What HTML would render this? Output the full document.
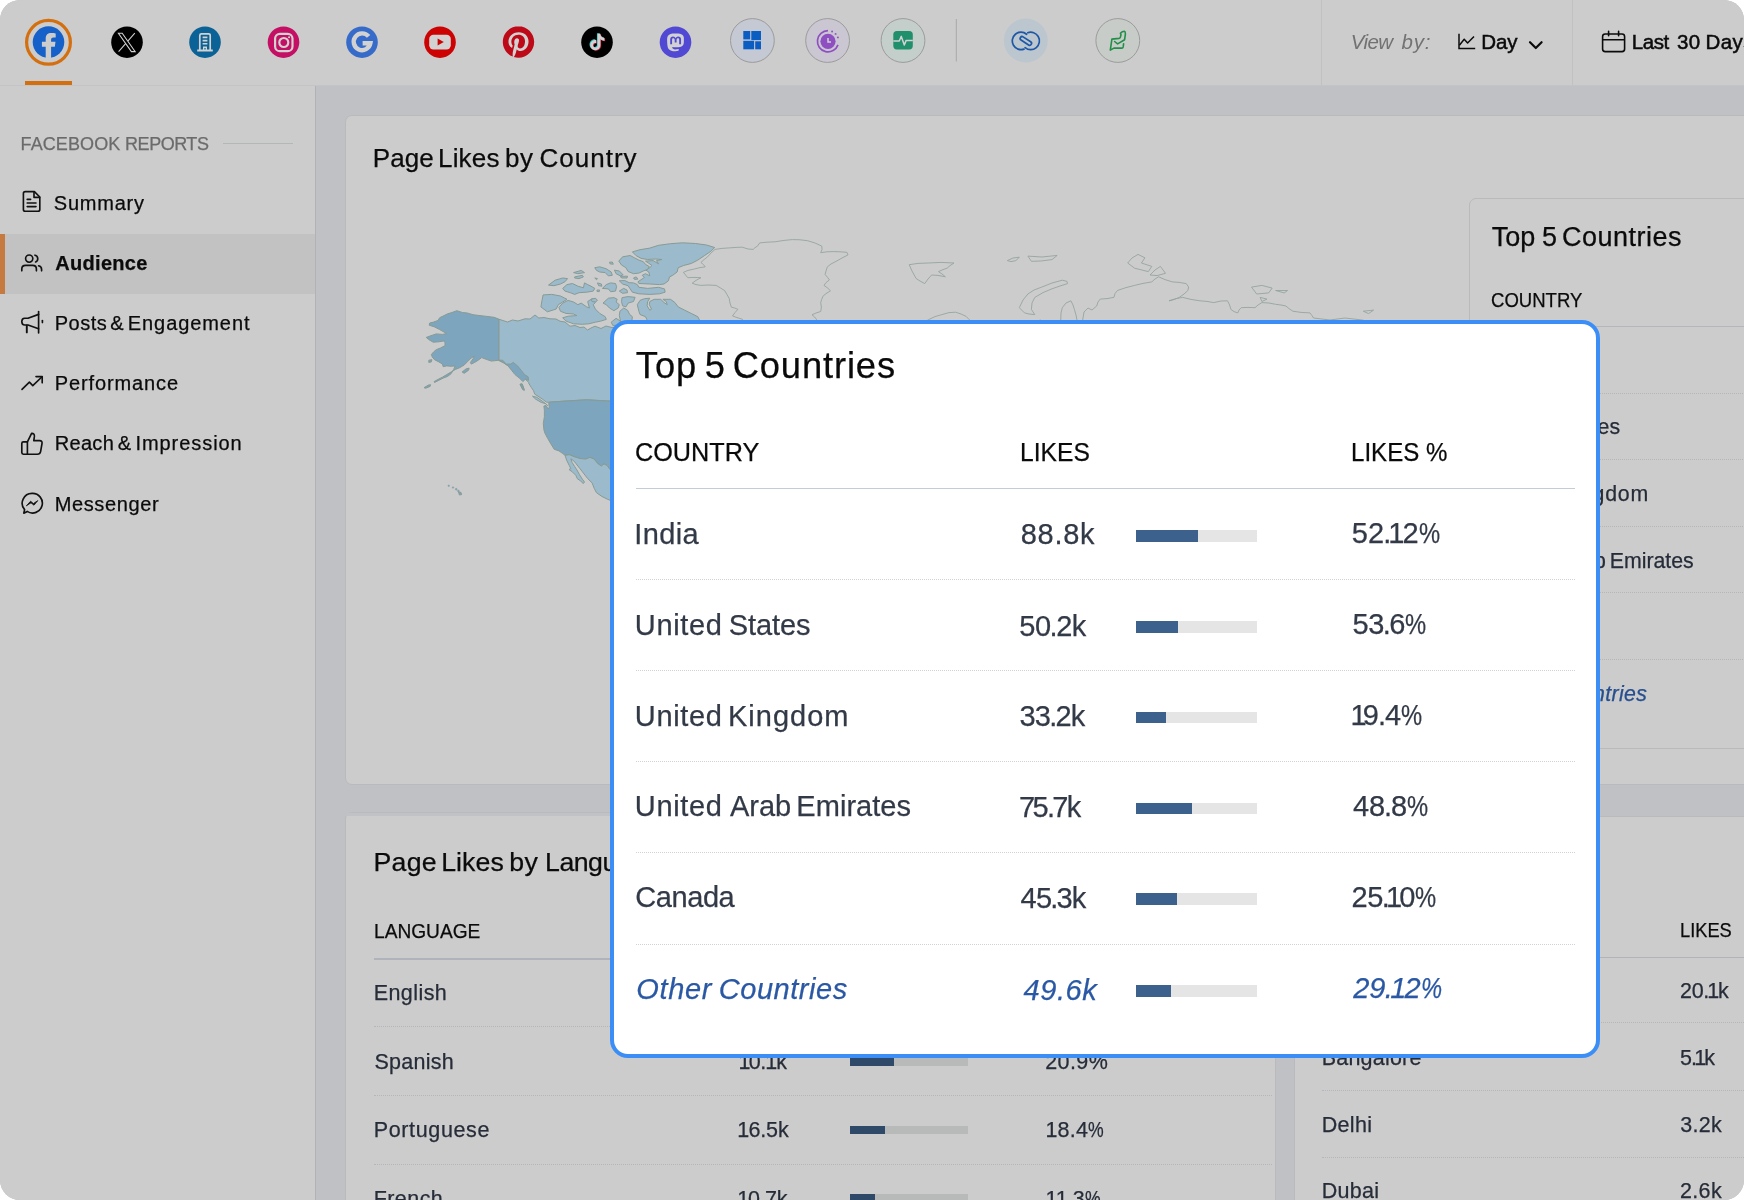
<!DOCTYPE html>
<html lang="en"><head><meta charset="utf-8"><title>Facebook Reports - Audience</title>
<style>
html,body{margin:0;padding:0;background:#fff;}
body{width:1744px;height:1200px;overflow:hidden;font-family:"Liberation Sans",sans-serif;}
#app{position:absolute;left:0;top:0;width:1744px;height:1200px;border-radius:20px;overflow:hidden;background:#c0c1c5;will-change:transform;}
.t{position:absolute;white-space:nowrap;line-height:1;-webkit-text-stroke:0.25px currentColor;}
.r{position:absolute;}
.w{position:absolute;top:0;white-space:pre;}
svg{position:absolute;overflow:visible;}
</style></head><body><div id="app">
<div class="r" style="left:0px;top:0px;width:1744px;height:85px;background:#cccccc;"></div>
<div class="r" style="left:0px;top:85px;width:1744px;height:1px;background:#c3c4c7;"></div>
<div class="r" style="left:0px;top:86px;width:315px;height:1114px;background:#cccccc;"></div>
<div class="r" style="left:315px;top:86px;width:1px;height:1114px;background:#b1b2b5;"></div>
<div class="r" style="left:1321px;top:0px;width:1px;height:85px;background:#c1c1c3;"></div>
<div class="r" style="left:1572px;top:0px;width:1px;height:85px;background:#c1c1c3;"></div>
<div class="r" style="left:0px;top:233.75px;width:315px;height:59.75px;background:#c2c2c2;"></div>
<div class="r" style="left:0px;top:233.75px;width:4.6px;height:59.75px;background:#c77a3f;"></div>
<div class="r" style="left:25px;top:81px;width:47px;height:4px;background:#d46f10;"></div>
<div class="r" style="left:345px;top:115px;width:1500px;height:670px;background:#cccccc;border:1px solid #b9babb;border-radius:7px;box-sizing:border-box;"></div>
<div class="r" style="left:1469px;top:198px;width:400px;height:550.5px;background:#cccccc;border:1px solid #b9babb;border-radius:7px;box-sizing:border-box;"></div>
<div class="r" style="left:345px;top:812px;width:931px;height:500px;background:#cccccc;border:1px solid #b9babb;border-radius:7px;box-sizing:border-box;"></div>
<div class="r" style="left:346px;top:813px;width:929px;height:2.5px;background:#c1c2c6;border-radius:6px 6px 0 0;"></div>
<div class="r" style="left:1294px;top:816px;width:600px;height:500px;background:#cccccc;border:1px solid #b9babb;border-radius:7px;box-sizing:border-box;"></div>
<svg width="1744" height="1200" viewBox="0 0 1744 1200" style="left:0;top:0">
<circle cx="48.5" cy="42.3" r="21.9" fill="none" stroke="#d46f10" stroke-width="3.2"/><circle cx="48.5" cy="42.1" r="15.8" fill="#1560c9"/><path transform="translate(48.5 42.1)" fill="#cccccc" d="M-2.8 16.2L-2.8 4.6L-6.6 4.6L-6.6 -0.4L-2.8 -0.4L-2.8 -3.6C-2.8 -7.3 -0.6 -9.1 2.7 -9.1C4.4 -9.1 6 -8.9 7.2 -8.7L7.2 -4.5L5 -4.5C3.1 -4.5 2.6 -3.6 2.6 -2.2L2.6 -0.4L7 -0.4L6.3 4.6L2.6 4.6L2.6 16.2Z"/>
<circle cx="127" cy="42.2" r="15.8" fill="#000"/><g transform="translate(126.8 42.4)" stroke="#d2d2d2" stroke-width="1.05" fill="#000"><path d="M8 -9.2L-8.2 9.2" /><path d="M-8.4 -9.2H-4.6L8.4 9.2H4.6Z"/></g>
<circle cx="205" cy="42.2" r="15.8" fill="#0b6296"/><g transform="translate(205 42)" fill="none" stroke="#d2d2d2" stroke-width="1.7"><path d="M-5.2 8.2V-6.6q0-1.6 1.6-1.6h7.2q1.6 0 1.6 1.6V8.2"/><path d="M-7.8 8.6H7.8" stroke-width="2"/><path d="M-2.4 -4.6H2.4M-2.4 -1.4H2.4M-2.4 1.8H2.4" stroke-width="1.6"/><path d="M-1.3 8.2V5.2H1.3V8.2" stroke-width="1.4"/></g>
<circle cx="283.5" cy="42.2" r="15.8" fill="#c50f65"/><g transform="translate(283.8 42.5)" fill="none" stroke="#d2d2d2" stroke-width="2.2"><rect x="-8.7" y="-8.7" width="17.4" height="17.4" rx="4.8"/><circle r="4.5"/><circle cx="5.3" cy="-5.3" r="1.05" fill="#d2d2d2" stroke="none"/></g>
<circle cx="362" cy="42.2" r="15.8" fill="#376bca"/><path transform="translate(362 42)" fill="none" stroke="#d2d2d2" stroke-width="4.4" d="M6.6 -5.6A8.4 8.4 0 1 0 8.4 1.2H0.6"/>
<circle cx="440" cy="42.2" r="15.8" fill="#cd0202"/><rect x="429.2" y="34.8" width="21.6" height="14.6" rx="4.2" fill="#d2d2d2"/><path d="M437.6 38.6L443.8 42.1L437.6 45.6Z" fill="#cd0202"/>
<circle cx="518.5" cy="42" r="15" fill="#d2d2d2"/><path transform="translate(518.5 42) scale(1.31) translate(-12 -12)" fill="#be0a18" d="M12.017 0C5.396 0 .029 5.367.029 11.987c0 5.079 3.158 9.417 7.618 11.162-.105-.949-.199-2.403.041-3.439.219-.937 1.406-5.957 1.406-5.957s-.359-.72-.359-1.781c0-1.663.967-2.911 2.168-2.911 1.024 0 1.518.769 1.518 1.688 0 1.029-.653 2.567-.992 3.992-.285 1.193.6 2.165 1.775 2.165 2.128 0 3.768-2.245 3.768-5.487 0-2.861-2.063-4.869-5.008-4.869-3.41 0-5.409 2.562-5.409 5.199 0 1.033.394 2.143.889 2.741.099.12.112.225.085.345-.09.375-.293 1.199-.334 1.363-.053.225-.172.271-.401.165-1.495-.69-2.433-2.878-2.433-4.646 0-3.776 2.748-7.252 7.92-7.252 4.158 0 7.392 2.967 7.392 6.923 0 4.135-2.607 7.462-6.233 7.462-1.214 0-2.354-.629-2.758-1.379l-.749 2.848c-.269 1.045-1.004 2.352-1.498 3.146 1.123.345 2.306.535 3.55.535 6.607 0 11.985-5.365 11.985-11.987C23.97 5.39 18.592.026 11.985.026L12.017 0z"/>
<circle cx="597" cy="42.2" r="15.8" fill="#000"/><path transform="translate(596.5999999999999 41.4) scale(0.68) translate(-12 -12)" fill="#22c9c4" d="M12.525.02c1.31-.02 2.61-.01 3.91-.02.08 1.53.63 3.09 1.75 4.17 1.12 1.11 2.7 1.62 4.24 1.79v4.03c-1.44-.05-2.89-.35-4.2-.97-.57-.26-1.1-.59-1.62-.93-.01 2.92.01 5.84-.02 8.75-.08 1.4-.54 2.79-1.35 3.94-1.31 1.92-3.58 3.17-5.91 3.21-1.43.08-2.86-.31-4.08-1.03-2.02-1.19-3.44-3.37-3.65-5.71-.02-.5-.03-1-.01-1.49.18-1.9 1.12-3.72 2.58-4.96 1.66-1.44 3.98-2.13 6.15-1.72.02 1.48-.04 2.96-.04 4.44-.99-.32-2.15-.23-3.02.37-.63.41-1.11 1.04-1.36 1.75-.21.51-.15 1.07-.14 1.61.24 1.64 1.82 3.02 3.5 2.87 1.12-.01 2.19-.66 2.77-1.61.19-.33.4-.67.41-1.06.1-1.79.06-3.57.07-5.36.01-4.03-.01-8.05.02-12.07z"/><path transform="translate(598.0 42.6) scale(0.68) translate(-12 -12)" fill="#d0264a" d="M12.525.02c1.31-.02 2.61-.01 3.91-.02.08 1.53.63 3.09 1.75 4.17 1.12 1.11 2.7 1.62 4.24 1.79v4.03c-1.44-.05-2.89-.35-4.2-.97-.57-.26-1.1-.59-1.62-.93-.01 2.92.01 5.84-.02 8.75-.08 1.4-.54 2.79-1.35 3.94-1.31 1.92-3.58 3.17-5.91 3.21-1.43.08-2.86-.31-4.08-1.03-2.02-1.19-3.44-3.37-3.65-5.71-.02-.5-.03-1-.01-1.49.18-1.9 1.12-3.72 2.58-4.96 1.66-1.44 3.98-2.13 6.15-1.72.02 1.48-.04 2.96-.04 4.44-.99-.32-2.15-.23-3.02.37-.63.41-1.11 1.04-1.36 1.75-.21.51-.15 1.07-.14 1.61.24 1.64 1.82 3.02 3.5 2.87 1.12-.01 2.19-.66 2.77-1.61.19-.33.4-.67.41-1.06.1-1.79.06-3.57.07-5.36.01-4.03-.01-8.05.02-12.07z"/><path transform="translate(597.3 42) scale(0.68) translate(-12 -12)" fill="#d2d2d2" d="M12.525.02c1.31-.02 2.61-.01 3.91-.02.08 1.53.63 3.09 1.75 4.17 1.12 1.11 2.7 1.62 4.24 1.79v4.03c-1.44-.05-2.89-.35-4.2-.97-.57-.26-1.1-.59-1.62-.93-.01 2.92.01 5.84-.02 8.75-.08 1.4-.54 2.79-1.35 3.94-1.31 1.92-3.58 3.17-5.91 3.21-1.43.08-2.86-.31-4.08-1.03-2.02-1.19-3.44-3.37-3.65-5.71-.02-.5-.03-1-.01-1.49.18-1.9 1.12-3.72 2.58-4.96 1.66-1.44 3.98-2.13 6.15-1.72.02 1.48-.04 2.96-.04 4.44-.99-.32-2.15-.23-3.02.37-.63.41-1.11 1.04-1.36 1.75-.21.51-.15 1.07-.14 1.61.24 1.64 1.82 3.02 3.5 2.87 1.12-.01 2.19-.66 2.77-1.61.19-.33.4-.67.41-1.06.1-1.79.06-3.57.07-5.36.01-4.03-.01-8.05.02-12.07z"/>
<circle cx="675.5" cy="42.2" r="15.8" fill="#5149d3"/><path transform="translate(675.5 42.4) scale(0.74) translate(-12 -11.9)" fill="#d2d2d2" d="M23.268 5.313c-.35-2.578-2.617-4.61-5.304-5.004C17.51.242 15.792 0 11.813 0h-.03c-3.98 0-4.835.242-5.288.309C3.882.692 1.496 2.518.917 5.127.64 6.412.61 7.837.661 9.143c.074 1.874.088 3.745.26 5.611.118 1.24.325 2.47.62 3.68.55 2.237 2.777 4.098 4.96 4.857 2.336.792 4.849.923 7.256.38.265-.061.527-.132.786-.213.585-.184 1.27-.39 1.774-.753a.057.057 0 0 0 .023-.043v-1.809a.052.052 0 0 0-.02-.041.053.053 0 0 0-.046-.01 20.282 20.282 0 0 1-4.709.545c-2.73 0-3.463-1.284-3.674-1.818a5.593 5.593 0 0 1-.319-1.433.053.053 0 0 1 .066-.054c1.517.363 3.072.546 4.632.546.376 0 .75 0 1.125-.01 1.57-.044 3.224-.124 4.768-.422.038-.008.077-.015.11-.024 2.435-.464 4.753-1.92 4.989-5.604.008-.145.03-1.52.03-1.67.002-.512.167-3.63-.024-5.545zm-3.748 9.195h-2.561V8.29c0-1.309-.55-1.976-1.67-1.976-1.23 0-1.846.79-1.846 2.35v3.403h-2.546V8.663c0-1.56-.617-2.35-1.848-2.35-1.112 0-1.668.668-1.67 1.977v6.218H4.822V8.102c0-1.31.337-2.35 1.011-3.12.696-.77 1.608-1.164 2.74-1.164 1.311 0 2.302.5 2.962 1.498l.638 1.06.638-1.06c.66-.999 1.65-1.498 2.96-1.498 1.13 0 2.043.395 2.74 1.164.675.77 1.012 1.81 1.012 3.12z"/>
<circle cx="752.4" cy="40.5" r="21.9" fill="#c5c9d3" stroke="#9b9b9b" stroke-width="1"/><g fill="#0b5dc2"><rect x="743.3" y="31" width="6.9" height="8.4"/><rect x="751.3" y="31" width="9.7" height="9.1"/><rect x="743.3" y="40.8" width="10.8" height="8.5"/><rect x="755.2" y="41.3" width="5.8" height="8"/></g>
<circle cx="827.6" cy="40.5" r="21.9" fill="#cbc7d2" stroke="#9b9b9b" stroke-width="1"/><g transform="translate(828 41.3)"><circle r="7.6" fill="#8e4fc1"/><path d="M0 -10.6A10.6 10.6 0 1 0 10 3.6" fill="none" stroke="#8e4fc1" stroke-width="1.7"/><circle cx="4.1" cy="-9.8" r="0.95" fill="#8e4fc1"/><circle cx="7.6" cy="-7.4" r="0.95" fill="#8e4fc1"/><circle cx="9.9" cy="-3.9" r="0.95" fill="#8e4fc1"/><path d="M0 -3.4V0.6H3" fill="none" stroke="#d2d2d2" stroke-width="1.5"/></g>
<circle cx="903" cy="40.5" r="21.9" fill="#c4cfcb" stroke="#9b9b9b" stroke-width="1"/><rect x="893.3" y="31" width="19.5" height="18.4" rx="3.6" fill="#208f6c"/><path d="M893.3 41H899.3L901.3 36.4L904.3 45L906.2 40.4H912.8" fill="none" stroke="#d2d2d2" stroke-width="1.5" stroke-linejoin="round"/>
<rect x="955.8" y="19" width="1" height="42.5" fill="#a9a9a9"/>
<circle cx="1025.8" cy="40.5" r="21.9" fill="#bcc6ce"/><g transform="translate(1025.85 40.9)" fill="none" stroke="#1d57a6" stroke-width="1.7" stroke-linecap="round"><path d="M0.74 -6.66A8.7 8.7 0 1 0 -1.87 8.18"/><path d="M-0.74 6.66A8.7 8.7 0 1 0 1.87 -8.18"/><rect x="-6.4" y="-1.9" width="12.8" height="3.8" rx="1.9" transform="rotate(33)"/></g>
<circle cx="1117.8" cy="40.5" r="21.9" fill="#c8ccc8" stroke="#9b9b9b" stroke-width="1"/><g transform="translate(1117.6 40.9)" fill="none" stroke="#218f48" stroke-width="1.6" stroke-linejoin="round" stroke-linecap="round"><path d="M6 2.8L5.6 6Q5.4 7.2 4.2 7.2H-3.7L-7.3 9.2L-5.7 -1.8L1.4 -2.5Q2.6 -2.7 2.8 -3.8L3.4 -6.2L2.8 -7.6Q4.6 -9.6 6.8 -9.6Q7.8 -9.4 7.8 -6.8L7 -1.2L0 3L-3 0.6"/></g>
<g fill="none" stroke="#0b0b0b" stroke-width="1.5"><path d="M1459 33.8V48.5H1475.2"/><path d="M1459.4 45.2L1464.2 39.2L1467.6 43L1474 36.4" stroke-linejoin="round"/></g>
<path d="M1530 42.2L1535.8 48L1541.6 42.2" fill="none" stroke="#0b0b0b" stroke-width="2.2" stroke-linecap="round" stroke-linejoin="round"/>
<g fill="none" stroke="#0b0b0b" stroke-width="1.6"><rect x="1602.6" y="34" width="22" height="17.6" rx="2.6"/><path d="M1602.6 39.8H1624.6"/><path d="M1608.6 31.4V35.8M1618.6 31.4V35.8" stroke-linecap="round"/></g>
<g fill="none" stroke="#111" stroke-width="1.65" stroke-linejoin="round" stroke-linecap="round"><path d="M25.2 191.6H34.4L39.8 197V209.4Q39.8 211.2 38 211.2H25.2Q23.4 211.2 23.4 209.4V193.4Q23.4 191.6 25.2 191.6Z"/><path d="M34 191.8V197.4H39.6"/><path d="M27.2 199.4H30.6M27.2 203H36M27.2 206.6H36"/></g>
<g fill="none" stroke="#111" stroke-width="1.65" stroke-linejoin="round" stroke-linecap="round"><circle cx="29.2" cy="258.6" r="3.6"/><path d="M21.8 270.8V269Q21.8 265.4 25.6 265.4H32.6Q36.4 265.4 36.4 269V270.8"/><path d="M35 255.2A3.6 3.6 0 0 1 35.6 262"/><path d="M38.6 265.8Q41.6 266.4 41.6 269.4V270.8"/></g>
<g fill="none" stroke="#111" stroke-width="1.65" stroke-linejoin="round" stroke-linecap="round"><path d="M38.6 311.6V333"/><path d="M38.6 314.4L28 318.2H24.6Q21.8 318.2 21.8 321.6Q21.8 325 24.6 325H28L38.6 328.8"/><path d="M26.8 325.4V332.4" stroke-width="1.9"/><path d="M42.4 320.6V322.6"/></g>
<g fill="none" stroke="#111" stroke-width="1.65" stroke-linejoin="round" stroke-linecap="round" stroke-width="1.7"><path d="M22 389.4L29.4 382.2L32.8 385.6L41.8 377"/><path d="M36 376.6H42.2V382.8"/></g>
<g fill="none" stroke="#111" stroke-width="1.65" stroke-linejoin="round" stroke-linecap="round"><path d="M27.4 441.8L31.6 433.4Q34.6 433.2 34.4 436.4L33.8 440.6H39.6Q42.6 440.8 42 443.6L40.6 451.6Q40 454.2 37.4 454.2H27.4"/><path d="M27.4 441.8V454.2H23.4Q21.8 454.2 21.8 452.6V443.4Q21.8 441.8 23.4 441.8Z"/></g>
<g fill="none" stroke="#111" stroke-width="1.65" stroke-linejoin="round" stroke-linecap="round"><path d="M32.2 493.4A9.8 9.8 0 1 1 27.2 511.4L23.8 513.2L24.6 509.6A9.8 9.8 0 0 1 32.2 493.4Z"/><path d="M26.6 505.6L30.6 501.2L33.4 503.6L37.8 500.6L34 505.2L31.2 503Z" fill="#111" stroke-width="0.8"/></g>
<g>
<path d="M498.8 319.2L507.5 322.0L512.5 320.0L518.0 321.0L525.0 318.8L530.0 319.0L535.0 315.0L538.8 318.0L544.0 317.5L550.0 318.8L556.0 319.0L560.0 321.2L565.0 322.0L570.0 326.2L575.0 325.5L580.0 327.5L584.0 327.0L587.5 330.0L591.0 328.0L595.0 326.2L601.0 328.5L606.0 326.0L612.0 327.5L622.0 326.0L640.0 330.0L640.0 401.1L609.9 401.1L586.6 399.8L565.0 401.1L549.3 402.2L546.6 402.2L542.2 399.0L537.9 396.2L534.7 394.1L533.6 390.8L531.4 387.6L528.7 383.2L528.8 382.5L524.0 378.0L517.5 373.8L513.0 370.0L510.0 367.5L505.0 363.5L498.8 360.5Z" fill="#9bbacc" stroke="#879b95" stroke-width="1.0" stroke-linejoin="round"/><path d="M498.8 319.1L494.0 317.3L487.0 316.4L480.0 315.6L473.0 314.7L466.9 312.9L462.5 312.5L456.8 310.7L452.0 312.5L447.6 313.8L443.2 316.0L439.7 317.7L438.0 320.4L433.6 322.1L429.7 323.0L429.2 325.2L434.5 326.9L439.7 329.6L445.0 332.6L446.7 333.5L442.4 334.4L436.2 333.9L431.0 335.7L426.2 337.4L428.8 339.6L433.2 342.2L438.9 341.8L444.1 340.9L445.0 342.7L445.0 345.7L440.6 347.9L436.2 349.7L433.6 351.9L431.4 354.5L432.3 357.1L434.5 359.7L438.9 361.9L442.4 364.1L443.2 366.7L446.7 365.9L451.1 366.3L455.1 365.9L453.7 369.4L451.1 373.7L447.6 376.4L443.2 378.1L438.9 380.3L434.5 382.5L434.1 381.6L438.0 379.4L442.4 377.2L446.7 374.6L451.1 372.0L455.5 369.4L459.9 367.6L464.2 365.0L467.7 361.5L471.2 358.0L474.3 356.2L473.0 358.9L470.4 362.4L471.2 364.1L474.7 362.4L478.2 360.2L481.7 357.6L486.1 359.3L491.4 361.1L498.8 360.2L502.7 360.2L506.2 364.1L510.6 364.1L513.2 362.4L517.6 365.9L521.1 370.2L524.6 374.6L528.1 376.8L528.6 380.3L525.5 379.0L522.9 381.6L519.4 378.1L515.0 374.6L511.5 370.2L508.0 365.9L503.6 362.8L498.8 360.2Z" fill="#7da5bd" stroke="#879b95" stroke-width="1.0" stroke-linejoin="round"/><path d="M549.3 402.2L565.0 401.1L586.6 399.8L609.9 401.1L639.7 401.1L639.7 469.9L609.9 469.4L607.2 465.6L604.0 463.9L601.3 466.1L597.5 463.4L594.2 459.1L589.9 457.4L585.6 459.1L580.1 458.5L574.7 456.9L569.3 454.7L565.0 455.3L562.8 453.6L559.0 450.9L554.2 449.3L550.9 443.9L547.7 438.5L544.9 433.1L543.9 429.8L543.3 423.3L544.4 416.8L544.4 410.3L543.9 406.0L546.0 405.5L548.2 409.0L549.3 407.1L548.7 403.3Z" fill="#7da5bd" stroke="#879b95" stroke-width="1.0" stroke-linejoin="round"/><path d="M565.0 455.3L569.3 454.7L574.7 456.9L580.1 458.5L585.6 459.1L589.9 457.4L594.2 459.1L597.5 463.4L601.3 466.1L604.0 463.9L607.2 465.6L609.9 469.4L639.7 469.9L639.7 507.8L609.9 500.2L607.2 499.1L601.8 496.4L596.4 492.6L594.2 488.3L592.1 482.9L587.7 478.6L583.4 473.1L580.1 468.8L575.8 463.4L573.6 460.7L570.9 458.8L572.0 462.3L574.7 466.6L576.9 469.9L579.6 474.8L582.3 479.1L584.5 482.0L583.2 483.6L580.7 480.9L577.4 478.8L575.8 475.3L572.6 472.1L569.0 469.5L570.9 468.6L569.3 465.6L566.6 460.1Z" fill="#9bbacc" stroke="#879b95" stroke-width="1.0" stroke-linejoin="round"/><path d="M462.1 372.0L466.0 368.9L469.1 368.1L468.6 370.2L464.2 373.3Z" fill="#7da5bd" stroke="#879b95" stroke-width="1.0" stroke-linejoin="round"/><path d="M428.8 360.2L431.9 359.7L431.4 361.9L428.8 362.4Z" fill="#7da5bd" stroke="#879b95" stroke-width="1.0" stroke-linejoin="round"/><path d="M424.0 387.7L428.4 385.1L430.6 384.7L430.1 386.4L425.7 388.2Z" fill="#7da5bd" stroke="#879b95" stroke-width="1.0" stroke-linejoin="round"/><path d="M520.2 384.2L522.0 383.8L524.2 389.5L522.9 389.1Z" fill="#7da5bd" stroke="#879b95" stroke-width="1.0" stroke-linejoin="round"/><path d="M532.5 396.2L536.8 397.3L542.2 401.1L546.6 404.4L547.7 405.8L545.5 403.6L541.2 402.4L535.7 399.2Z" fill="#9bbacc" stroke="#879b95" stroke-width="1.0" stroke-linejoin="round"/><path d="M520.0 384.3L522.2 384.1L524.4 390.3L522.7 389.7Z" fill="#7da5bd" stroke="#879b95" stroke-width="1.0" stroke-linejoin="round"/><circle cx="448.75" cy="485.75" r="0.8" fill="#7da5bd" stroke="#879b95" stroke-width="0.5"/><circle cx="453" cy="487.5" r="0.8" fill="#7da5bd" stroke="#879b95" stroke-width="0.5"/><circle cx="456.25" cy="489.25" r="0.9" fill="#7da5bd" stroke="#879b95" stroke-width="0.5"/><circle cx="458.4" cy="491" r="0.9" fill="#7da5bd" stroke="#879b95" stroke-width="0.5"/><path d="M458.6 492.0L461.0 492.4L461.6 494.6L459.4 495.0Z" fill="#7da5bd" stroke="#879b95" stroke-width="1.0" stroke-linejoin="round"/><path d="M632.4 251.9L640.0 249.7L649.8 248.1L658.6 245.3L670.5 243.7L682.5 242.8L695.6 243.5L706.5 245.0L714.7 247.5L710.8 251.3L704.3 255.7L697.8 260.1L691.2 263.5L683.6 265.5L678.2 267.7L677.1 272.0L672.7 275.3L669.5 276.9L668.4 280.8L664.0 284.0L659.6 284.6L649.8 284.0L638.9 283.5L637.9 281.8L641.1 279.7L644.4 277.5L642.2 275.3L645.5 273.7L649.8 275.9L648.8 272.0L645.5 269.9L649.8 267.7L652.0 265.5L648.8 263.3L645.5 261.1L653.1 260.6L658.6 263.9L656.4 260.6L661.8 259.5L655.3 259.0L647.7 259.5L641.1 258.4L636.2 255.7Z" fill="#9bbacc" stroke="#879b95" stroke-width="1.0" stroke-linejoin="round"/><path d="M618.8 261.1L622.6 256.8L630.2 255.5L634.6 257.9L638.9 260.1L643.3 261.7L645.5 264.4L649.3 266.6L647.7 269.3L643.3 271.0L638.9 273.1L633.5 273.7L628.1 271.5L625.9 267.7L621.5 265.0Z" fill="#9bbacc" stroke="#879b95" stroke-width="1.0" stroke-linejoin="round"/><path d="M619.3 280.8L624.8 280.5L629.1 282.7L633.5 282.9L637.3 284.6L638.9 287.3L647.7 288.4L658.6 287.3L664.5 288.9L665.1 292.2L659.6 293.8L649.8 294.4L638.9 293.8L632.4 292.2L630.2 288.9L628.1 285.7L622.6 284.0Z" fill="#9bbacc" stroke="#879b95" stroke-width="1.0" stroke-linejoin="round"/><path d="M637.3 304.7L640.0 300.4L644.4 298.7L649.8 298.2L647.7 301.5L647.1 305.8L649.8 310.2L651.5 309.1L649.3 304.7L649.8 301.5L654.2 299.3L660.7 299.3L664.0 302.5L667.3 304.7L666.2 301.5L662.9 299.3L670.5 299.3L674.9 302.5L678.2 306.9L684.7 310.2L691.2 313.4L697.8 316.7L700.0 321.1L702.1 325.4L671.6 325.4L649.8 325.4L645.5 316.7L640.0 314.5L638.9 311.3Z" fill="#9bbacc" stroke="#879b95" stroke-width="1.0" stroke-linejoin="round"/><path d="M558.9 307.4L562.7 303.1L568.1 300.4L573.6 302.0L577.9 304.7L581.2 303.1L586.7 306.9L589.4 308.0L587.7 301.5L592.1 298.7L596.5 299.3L595.4 302.5L593.2 304.7L595.4 309.1L599.7 313.4L605.2 316.7L606.3 319.4L600.8 321.1L595.4 322.2L588.8 323.8L582.3 324.3L573.6 323.8L566.0 321.1L562.7 317.8L568.1 316.2L576.8 315.6L573.6 314.0L566.0 313.4L560.5 311.3Z" fill="#9bbacc" stroke="#879b95" stroke-width="1.0" stroke-linejoin="round"/><path d="M543.1 294.9L551.8 294.4L560.5 296.0L567.0 299.3L562.7 302.0L558.3 304.7L556.1 309.1L547.4 311.8L540.9 306.9L542.0 300.4Z" fill="#9bbacc" stroke="#879b95" stroke-width="1.0" stroke-linejoin="round"/><path d="M562.7 288.4L567.0 284.6L572.5 283.5L577.9 286.2L583.4 287.8L584.5 282.9L587.7 284.6L591.0 286.2L594.8 288.4L593.2 291.1L586.7 292.2L579.0 292.7L574.7 294.4L570.3 292.7L564.9 291.1Z" fill="#9bbacc" stroke="#879b95" stroke-width="1.0" stroke-linejoin="round"/><path d="M548.5 285.1L555.1 280.2L562.7 278.0L567.6 278.6L564.9 281.8L560.5 284.0L554.0 285.7Z" fill="#9bbacc" stroke="#879b95" stroke-width="1.0" stroke-linejoin="round"/><path d="M573.6 272.6L581.2 270.4L584.5 272.6L577.9 273.7Z" fill="#9bbacc" stroke="#879b95" stroke-width="1.0" stroke-linejoin="round"/><path d="M574.7 276.9L582.3 275.3L583.4 276.9L579.0 278.6L574.7 278.0Z" fill="#9bbacc" stroke="#879b95" stroke-width="1.0" stroke-linejoin="round"/><path d="M594.8 267.7L599.7 266.8L606.3 268.8L611.2 272.0L612.3 275.3L608.4 275.9L605.2 272.6L599.7 272.0L596.5 270.4Z" fill="#9bbacc" stroke="#879b95" stroke-width="1.0" stroke-linejoin="round"/><path d="M614.4 270.1L619.3 271.0L623.1 274.8L620.4 275.9L616.1 273.7Z" fill="#9bbacc" stroke="#879b95" stroke-width="1.0" stroke-linejoin="round"/><path d="M620.4 276.4L627.5 276.2L627.0 278.0L621.5 278.0Z" fill="#9bbacc" stroke="#879b95" stroke-width="1.0" stroke-linejoin="round"/><path d="M609.5 262.2L612.3 262.0L613.3 264.2L610.1 263.9Z" fill="#9bbacc" stroke="#879b95" stroke-width="1.0" stroke-linejoin="round"/><path d="M602.4 288.4L606.3 284.6L610.6 282.9L615.5 283.5L616.6 286.7L615.5 291.1L610.6 291.7L608.4 288.9Z" fill="#9bbacc" stroke="#879b95" stroke-width="1.0" stroke-linejoin="round"/><path d="M597.5 282.9L601.4 284.0L601.9 286.2L598.6 285.7Z" fill="#9bbacc" stroke="#879b95" stroke-width="1.0" stroke-linejoin="round"/><path d="M619.3 291.1L623.7 288.4L627.0 290.0L627.5 292.7L622.6 293.3Z" fill="#9bbacc" stroke="#879b95" stroke-width="1.0" stroke-linejoin="round"/><path d="M603.0 303.1L608.4 298.2L613.9 297.6L617.2 299.3L616.1 302.0L619.3 304.7L618.2 308.0L613.9 310.7L609.5 308.0L606.3 304.7Z" fill="#9bbacc" stroke="#879b95" stroke-width="1.0" stroke-linejoin="round"/><path d="M622.1 297.6L628.1 296.6L635.1 297.3L633.5 301.5L628.1 303.1L625.9 306.9L622.6 305.8L621.5 301.5Z" fill="#9bbacc" stroke="#879b95" stroke-width="1.0" stroke-linejoin="round"/><path d="M619.9 311.3L623.7 308.0L627.5 310.2L629.7 314.5L632.4 316.7L631.3 325.4L621.5 325.4L619.3 315.6Z" fill="#9bbacc" stroke="#879b95" stroke-width="1.0" stroke-linejoin="round"/><path d="M611.2 322.2L616.1 318.3L620.4 321.1L619.3 325.4L612.8 325.4Z" fill="#9bbacc" stroke="#879b95" stroke-width="1.0" stroke-linejoin="round"/><path d="M633.5 278.0L636.2 276.9L637.9 279.1L634.6 279.4Z" fill="#9bbacc" stroke="#879b95" stroke-width="1.0" stroke-linejoin="round"/><path d="M591.0 299.3L595.4 298.2L597.5 300.4L595.4 302.0L592.1 301.5Z" fill="#9bbacc" stroke="#879b95" stroke-width="1.0" stroke-linejoin="round"/><path d="M597.0 290.0L599.7 290.0L599.2 291.7L597.0 291.4Z" fill="#9bbacc" stroke="#879b95" stroke-width="1.0" stroke-linejoin="round"/><path d="M594.8 278.0L597.5 278.6L596.5 279.7Z" fill="#9bbacc" stroke="#879b95" stroke-width="1.0" stroke-linejoin="round"/><path d="M715.0 249.4L722.0 248.4L729.2 247.9L736.0 247.4L742.3 247.2L748.0 249.0L753.2 249.4L755.0 247.6L757.5 246.1L759.7 242.9L767.0 242.2L775.0 241.8L784.0 240.4L792.4 239.6L800.0 239.8L807.6 240.7L815.0 243.0L821.8 246.1L822.0 249.6L820.7 252.7L827.0 251.8L833.8 251.6L840.0 251.8L846.9 252.3L848.0 254.9L842.0 258.0L836.0 261.4L831.0 264.0L827.3 266.9L826.0 271.0L825.1 274.5L827.6 277.4L829.4 279.9L826.0 282.6L824.0 285.4L827.6 288.0L830.5 290.8L826.0 293.6L822.9 296.3L821.6 299.6L820.7 302.8L821.4 307.0L820.7 311.5L816.0 313.0L812.0 314.8L814.6 317.0L816.4 319.2L818.0 324.0" fill="none" stroke="#95a59f" stroke-width="0.9" stroke-linejoin="round"/><path d="M715.0 249.4L711.0 253.0L707.4 257.0L704.0 259.6L700.9 262.5L703.6 264.6L705.2 266.9L700.0 267.6L694.3 269.0L688.0 270.4L683.4 272.3L685.6 275.0L687.8 277.7L694.0 277.4L700.9 277.7L696.0 280.4L692.2 283.2L696.0 284.6L700.9 285.4L708.0 285.0L716.1 285.4L720.6 288.0L724.8 290.8L727.0 294.6L729.2 298.4L730.0 303.0L731.4 307.2L734.6 308.0L737.9 309.3L735.0 312.6L732.5 315.9L737.0 317.6L742.3 319.2L744.0 324.0" fill="none" stroke="#95a59f" stroke-width="0.9" stroke-linejoin="round"/><path d="M909.2 264.7L918.0 263.4L928.2 263.0L941.0 262.4L954.0 263.0L950.0 265.6L947.1 268.2L943.0 269.6L938.5 271.6L942.0 274.0L945.4 276.8L938.0 275.4L931.6 275.0L928.0 279.0L924.7 283.6L920.0 281.0L916.1 278.5L912.0 271.0Z" fill="none" stroke="#95a59f" stroke-width="0.9" stroke-linejoin="round"/><path d="M1007.3 260.6L1013.0 258.0L1019.3 257.2L1015.9 260.6L1011.0 261.6Z" fill="none" stroke="#95a59f" stroke-width="0.9" stroke-linejoin="round"/><path d="M1027.9 256.1L1042.0 257.0L1057.2 255.4L1052.0 259.6L1041.0 261.0L1031.4 261.3Z" fill="none" stroke="#95a59f" stroke-width="0.9" stroke-linejoin="round"/><path d="M1019.3 307.7L1023.0 300.0L1027.9 294.0L1034.0 290.0L1041.7 287.1L1052.0 283.0L1062.3 280.2L1067.0 281.4L1067.5 283.6L1060.0 286.0L1052.0 288.8L1043.0 292.6L1034.8 297.4L1032.0 303.0L1031.4 309.4L1034.8 314.6L1029.0 314.0L1024.5 312.9Z" fill="none" stroke="#95a59f" stroke-width="0.9" stroke-linejoin="round"/><path d="M1127.7 263.0L1132.0 258.0L1138.0 254.4L1144.9 257.8L1141.4 263.0L1151.8 266.4L1148.3 271.6L1134.6 268.2Z" fill="none" stroke="#95a59f" stroke-width="0.9" stroke-linejoin="round"/><path d="M1150.0 275.0L1155.0 270.0L1160.4 266.4L1165.5 273.3L1157.0 275.6Z" fill="none" stroke="#95a59f" stroke-width="0.9" stroke-linejoin="round"/><path d="M1060.6 324.0L1061.0 313.0L1062.3 307.7L1066.0 303.0L1070.9 300.8L1073.0 305.0L1074.4 309.4L1076.0 315.0L1077.8 324.0" fill="none" stroke="#95a59f" stroke-width="0.9" stroke-linejoin="round"/><path d="M1082.0 324.0L1084.0 312.0L1088.0 308.0L1092.0 310.0L1096.7 306.0L1098.0 302.0L1100.2 299.1L1107.0 298.6L1113.9 297.4L1115.0 293.6L1117.4 290.5L1126.0 287.6L1134.6 285.4L1143.0 283.4L1151.8 281.9L1155.0 279.0L1158.6 276.8L1165.0 279.6L1172.4 281.9L1179.0 282.4L1186.2 283.6L1188.6 287.0L1187.9 290.5L1184.0 294.0L1179.3 297.4L1174.0 299.6L1169.0 300.8L1176.0 298.6L1182.7 297.4L1191.0 299.4L1199.9 300.8L1207.0 301.4L1213.7 302.6L1221.0 301.0L1227.5 300.8L1229.6 305.0L1230.9 309.4L1234.0 311.6L1237.8 312.9L1239.0 310.0L1241.2 307.7L1248.0 307.4L1255.0 307.7L1258.0 305.0L1261.9 302.6L1269.0 303.0L1275.6 304.3L1281.0 305.0L1285.9 306.0L1289.0 308.6L1292.8 311.2L1301.0 312.4L1310.0 312.9L1312.0 315.6L1313.5 318.0L1330.0 320.0L1345.0 318.0L1362.0 320.0L1380.0 324.0" fill="none" stroke="#95a59f" stroke-width="0.9" stroke-linejoin="round"/><path d="M1251.5 287.1L1261.9 285.4L1272.2 288.1L1268.7 292.9L1256.7 294.0Z" fill="none" stroke="#95a59f" stroke-width="0.9" stroke-linejoin="round"/><path d="M1275.6 290.5L1287.6 290.5L1284.2 292.9Z" fill="none" stroke="#95a59f" stroke-width="0.9" stroke-linejoin="round"/><path d="M1260.1 297.4L1267.0 299.1L1261.9 301.5Z" fill="none" stroke="#95a59f" stroke-width="0.9" stroke-linejoin="round"/><path d="M1363.3 311.2L1373.6 310.1L1368.5 313.6Z" fill="none" stroke="#95a59f" stroke-width="0.9" stroke-linejoin="round"/><path d="M922.0 324.0L928.2 319.8L935.0 316.6L941.9 314.6L949.0 312.6L955.7 312.2L961.0 314.0L966.0 316.3L969.4 319.8L975.0 324.0" fill="none" stroke="#95a59f" stroke-width="0.9" stroke-linejoin="round"/><path d="M1034.0 324.0L1040.0 320.0L1046.0 322.0L1052.0 324.0" fill="none" stroke="#95a59f" stroke-width="0.9" stroke-linejoin="round"/></g>
</svg>
<div class="t" style="left:22.10px;top:135.00px;font-size:18px;color:#6b6b6b;height:18px;"><span class="w" style="left:-1.50px;letter-spacing:0.086px;">FACEBOOK </span><span class="w" style="left:103.00px;letter-spacing:-0.483px;">REPORTS</span></div>
<div class="r" style="left:223px;top:143.2px;width:69.5px;height:1px;background:#b2b8b8;"></div>
<div class="t" style="left:53.85px;top:193.00px;font-size:20px;color:#0b0b0b;letter-spacing:0.758px;">Summary</div>
<div class="t" style="left:55.20px;top:253.00px;font-size:20px;color:#0b0b0b;letter-spacing:0.314px;font-weight:bold;">Audience</div>
<div class="t" style="left:56.25px;top:313.00px;font-size:20px;color:#0b0b0b;height:20px;"><span class="w" style="left:-1.60px;letter-spacing:0.512px;">Posts </span><span class="w" style="left:54.05px;">&amp; </span><span class="w" style="left:71.55px;letter-spacing:0.922px;">Engagement</span></div>
<div class="t" style="left:54.65px;top:373.00px;font-size:20px;color:#0b0b0b;letter-spacing:0.900px;">Performance</div>
<div class="t" style="left:56.25px;top:433.00px;font-size:20px;color:#0b0b0b;height:20px;"><span class="w" style="left:-1.60px;letter-spacing:0.338px;">Reach </span><span class="w" style="left:61.55px;">&amp; </span><span class="w" style="left:79.20px;letter-spacing:0.939px;">Impression</span></div>
<div class="t" style="left:54.65px;top:494.00px;font-size:20px;color:#0b0b0b;letter-spacing:0.650px;">Messenger</div>
<div class="t" style="left:1352.50px;top:32.00px;font-size:20.5px;color:#727272;height:20.5px;font-style:italic;-webkit-text-stroke:0;"><span class="w" style="left:-1.80px;letter-spacing:-0.550px;">View </span><span class="w" style="left:48.95px;letter-spacing:0.850px;">by:</span></div>
<div class="t" style="left:1481.30px;top:32.00px;font-size:20.5px;color:#0b0b0b;letter-spacing:-0.100px;-webkit-text-stroke:0.5px #0b0b0b;">Day</div>
<div class="t" style="left:1633.50px;top:32.00px;font-size:20.5px;color:#0b0b0b;height:20.5px;-webkit-text-stroke:0.5px #0b0b0b;"><span class="w" style="left:-1.70px;letter-spacing:-0.417px;">Last </span><span class="w" style="left:43.48px;letter-spacing:0.500px;">30 </span><span class="w" style="left:72.05px;letter-spacing:0.400px;">Days</span></div>
<div class="t" style="left:374.90px;top:145.00px;font-size:26px;color:#0b0b0b;height:26px;"><span class="w" style="left:-2.10px;letter-spacing:0.100px;">Page </span><span class="w" style="left:63.10px;letter-spacing:0.200px;">Likes </span><span class="w" style="left:130.05px;letter-spacing:0.500px;">by </span><span class="w" style="left:164.70px;letter-spacing:1.000px;">Country</span></div>
<div class="t" style="left:1492.25px;top:224.00px;font-size:27px;color:#0b0b0b;height:27px;"><span class="w" style="left:-0.60px;letter-spacing:0.100px;">Top </span><span class="w" style="left:49.65px;">5 </span><span class="w" style="left:69.85px;letter-spacing:0.475px;">Countries</span></div>
<div class="t" style="left:1491.07px;top:290.00px;font-size:20px;color:#0b0b0b;transform:scaleX(0.9269);transform-origin:0 0;">COUNTRY</div>
<div class="r" style="left:1491px;top:325.5px;width:300px;height:1.5px;background:#b3b7bd;"></div>
<div class="t" style="left:1492.80px;top:350.00px;font-size:21.3px;color:#262c38;height:21.3px;"><span class="w" style="left:-2.00px;letter-spacing:0.270px;">India</span></div>
<div class="t" style="left:1492.80px;top:417.00px;font-size:21.3px;color:#262c38;height:21.3px;"><span class="w" style="left:-1.60px;letter-spacing:0.453px;">United </span><span class="w" style="left:67.20px;letter-spacing:-0.061px;">States</span></div>
<div class="t" style="left:1492.80px;top:484.00px;font-size:21.3px;color:#262c38;height:21.3px;"><span class="w" style="left:-1.60px;letter-spacing:0.453px;">United </span><span class="w" style="left:66.50px;letter-spacing:0.816px;">Kingdom</span></div>
<div class="t" style="left:1492.80px;top:551.00px;font-size:21.3px;color:#262c38;height:21.3px;"><span class="w" style="left:-1.60px;letter-spacing:0.453px;">United </span><span class="w" style="left:68.10px;">Arab </span><span class="w" style="left:116.91px;">Emirates</span></div>
<div class="t" style="left:1492.62px;top:617.00px;font-size:21.3px;color:#262c38;height:21.3px;"><span class="w" style="left:-1.10px;letter-spacing:-0.347px;">Canada</span></div>
<div class="t" style="left:1493.39px;top:684.00px;font-size:21.3px;color:#274f8e;height:21.3px;font-style:italic;"><span class="w" style="left:-1.10px;letter-spacing:0.451px;">Other </span><span class="w" style="left:59.37px;letter-spacing:0.380px;">Countries</span></div>
<div class="r" style="left:1491px;top:392.65px;width:300px;height:0;border-top:1.5px dotted #b3b6bb;"></div>
<div class="r" style="left:1491px;top:458.95px;width:300px;height:0;border-top:1.5px dotted #b3b6bb;"></div>
<div class="r" style="left:1491px;top:525.65px;width:300px;height:0;border-top:1.5px dotted #b3b6bb;"></div>
<div class="r" style="left:1491px;top:592.25px;width:300px;height:0;border-top:1.5px dotted #b3b6bb;"></div>
<div class="r" style="left:1491px;top:659.25px;width:300px;height:0;border-top:1.5px dotted #b3b6bb;"></div>
<div class="t" style="left:375.75px;top:849.00px;font-size:26.7px;color:#0b0b0b;height:26.7px;"><span class="w" style="left:-2.20px;letter-spacing:0.250px;">Page </span><span class="w" style="left:65.45px;letter-spacing:0.075px;">Likes </span><span class="w" style="left:133.45px;letter-spacing:0.500px;">by </span><span class="w" style="left:169.35px;letter-spacing:-0.500px;">Language</span></div>
<div class="t" style="left:373.97px;top:921.00px;font-size:20px;color:#0b0b0b;transform:scaleX(0.9568);transform-origin:0 0;">LANGUAGE</div>
<div class="r" style="left:374px;top:958px;width:898px;height:1.5px;background:#b0b4ba;"></div>
<div class="t" style="left:373.70px;top:983.00px;font-size:21.5px;color:#262c38;letter-spacing:0.433px;">English</div>
<div class="t" style="left:374.50px;top:1052.00px;font-size:21.5px;color:#262c38;letter-spacing:0.242px;">Spanish</div>
<div class="t" style="left:738.40px;top:1052.00px;font-size:21.5px;color:#262c38;"><span style="margin:0 -1.62px 0 -0.00px">1</span>0<span style="margin:0 -0.38px 0 -0.38px">.</span><span style="margin:0 -0.81px 0 -0.81px">1</span>k</div>
<div class="t" style="left:1045.15px;top:1052.00px;font-size:21.5px;color:#262c38;letter-spacing:0.412px;">20.9%</div>
<div class="r" style="left:850px;top:1057.5px;width:117.5px;height:8.25px;background:#b8baba;"></div>
<div class="r" style="left:850px;top:1057.5px;width:43.75px;height:8.25px;background:#2f4a68;"></div>
<div class="t" style="left:373.70px;top:1120.00px;font-size:21.5px;color:#262c38;letter-spacing:0.644px;">Portuguese</div>
<div class="t" style="left:737.15px;top:1120.00px;font-size:21.5px;color:#262c38;"><span style="margin:0 -0.68px 0 -0.00px">1</span>6<span style="margin:0 -0.16px 0 -0.16px">.</span>5k</div>
<div class="t" style="left:1045.40px;top:1120.00px;font-size:21.5px;color:#262c38;letter-spacing:0.210px;">18.4<span style="display:inline-block;transform:scaleX(0.82);transform-origin:0 0;margin-right:-3.44px">%</span></div>
<div class="r" style="left:850px;top:1125.75px;width:117.5px;height:8.25px;background:#b8baba;"></div>
<div class="r" style="left:850px;top:1125.75px;width:35px;height:8.25px;background:#2f4a68;"></div>
<div class="t" style="left:373.70px;top:1189.00px;font-size:21.5px;color:#262c38;letter-spacing:0.440px;">French</div>
<div class="t" style="left:737.15px;top:1189.00px;font-size:21.5px;color:#262c38;"><span style="margin:0 -1.16px 0 -0.00px">1</span>0<span style="margin:0 -0.27px 0 -0.27px">.</span><span style="margin:0 -0.27px 0 -0.27px">7</span>k</div>
<div class="t" style="left:1045.40px;top:1189.00px;font-size:21.5px;color:#262c38;"><span style="margin:0 -1.08px 0 -0.00px">1</span><span style="margin:0 -0.54px 0 -0.54px">1</span><span style="margin:0 -0.25px 0 -0.25px">.</span>3<span style="display:inline-block;transform:scaleX(0.82);transform-origin:0 0;margin-right:-3.44px">%</span></div>
<div class="r" style="left:850px;top:1194.25px;width:117.5px;height:8.25px;background:#b8baba;"></div>
<div class="r" style="left:850px;top:1194.25px;width:24.5px;height:8.25px;background:#2f4a68;"></div>
<div class="r" style="left:374px;top:1026.25px;width:898px;height:0;border-top:1.5px dotted #b3b6bb;"></div>
<div class="r" style="left:374px;top:1094.75px;width:898px;height:0;border-top:1.5px dotted #b3b6bb;"></div>
<div class="r" style="left:374px;top:1163.5px;width:898px;height:0;border-top:1.5px dotted #b3b6bb;"></div>
<div class="t" style="left:1679.54px;top:920.00px;font-size:20px;color:#0b0b0b;transform:scaleX(0.9133);transform-origin:0 0;">LIKES</div>
<div class="r" style="left:1322px;top:956.5px;width:430px;height:1.5px;background:#b0b4ba;"></div>
<div class="t" style="left:1679.90px;top:981.00px;font-size:21.5px;color:#262c38;">20<span style="margin:0 -0.60px 0 -0.60px">.</span><span style="margin:0 -1.28px 0 -1.28px">1</span>k</div>
<div class="t" style="left:1321.70px;top:1048.00px;font-size:21.5px;color:#262c38;letter-spacing:0.213px;">Bangalore</div>
<div class="t" style="left:1680.10px;top:1048.00px;font-size:21.5px;color:#262c38;letter-spacing:-0.357px;">5<span style="margin:0 -0.75px 0 -0.75px">.</span><span style="margin:0 -1.61px 0 -1.61px">1</span>k</div>
<div class="t" style="left:1321.70px;top:1115.00px;font-size:21.5px;color:#262c38;letter-spacing:0.325px;">Delhi</div>
<div class="t" style="left:1680.20px;top:1115.00px;font-size:21.5px;color:#262c38;letter-spacing:0.283px;">3.2k</div>
<div class="t" style="left:1321.70px;top:1181.00px;font-size:21.5px;color:#262c38;letter-spacing:0.275px;">Dubai</div>
<div class="t" style="left:1679.90px;top:1181.00px;font-size:21.5px;color:#262c38;letter-spacing:0.383px;">2.6k</div>
<div class="r" style="left:1322px;top:1022.25px;width:430px;height:0;border-top:1.5px dotted #b3b6bb;"></div>
<div class="r" style="left:1322px;top:1089.75px;width:430px;height:0;border-top:1.5px dotted #b3b6bb;"></div>
<div class="r" style="left:1322px;top:1156.75px;width:430px;height:0;border-top:1.5px dotted #b3b6bb;"></div>
<div class="r" style="left:610px;top:320px;width:990px;height:737.5px;box-sizing:border-box;border:4px solid #3a8ef6;border-radius:18px;background:#fff;"></div>
<div class="t" style="left:636.25px;top:348.00px;font-size:36.3px;color:#0a0a0a;height:36.3px;"><span class="w" style="left:-0.53px;letter-spacing:1.000px;">Top </span><span class="w" style="left:68.50px;">5 </span><span class="w" style="left:96.45px;letter-spacing:0.881px;">Countries</span></div>
<div class="t" style="left:635.01px;top:439.00px;font-size:26.5px;color:#0a0a0a;transform:scaleX(0.9518);transform-origin:0 0;">COUNTRY</div>
<div class="t" style="left:1019.95px;top:439.00px;font-size:26.5px;color:#0a0a0a;transform:scaleX(0.9297);transform-origin:0 0;">LIKES</div>
<div class="t" style="left:1351.00px;top:439.00px;font-size:26.5px;color:#0a0a0a;transform:scaleX(0.9086);transform-origin:0 0;">LIKES %</div>
<div class="r" style="left:636px;top:487.5px;width:939px;height:1.5px;background:#c4ccd6;"></div>
<div class="t" style="left:637.00px;top:520.00px;font-size:29px;color:#333a47;height:29px;"><span class="w" style="left:-2.70px;letter-spacing:0.387px;">India</span></div>
<div class="t" style="left:1020.70px;top:520.00px;font-size:29px;color:#333a47;letter-spacing:0.725px;">88.8k</div>
<div class="t" style="left:1351.80px;top:519.00px;font-size:29px;color:#333a47;">52<span style="margin:0 -0.92px 0 -0.92px">.</span><span style="margin:0 -1.98px 0 -1.98px">1</span>2<span style="display:inline-block;transform:scaleX(0.82);transform-origin:0 0;margin-right:-4.64px">%</span></div>
<div class="r" style="left:1135.75px;top:529.75px;width:121px;height:11.75px;background:#e5e5e5;"></div>
<div class="r" style="left:1135.75px;top:529.75px;width:62.5px;height:11.75px;background:#3b618c;"></div>
<div class="t" style="left:637.00px;top:611.00px;font-size:29px;color:#333a47;height:29px;"><span class="w" style="left:-2.20px;letter-spacing:0.640px;">United </span><span class="w" style="left:91.70px;letter-spacing:-0.080px;">States</span></div>
<div class="t" style="left:1019.30px;top:612.00px;font-size:29px;color:#333a47;letter-spacing:-0.480px;">50<span style="margin:0 -1.02px 0 -1.02px">.</span>2k</div>
<div class="t" style="left:1352.55px;top:610.00px;font-size:29px;color:#333a47;letter-spacing:-0.520px;">53<span style="margin:0 -1.02px 0 -1.02px">.</span>6<span style="display:inline-block;transform:scaleX(0.82);transform-origin:0 0;margin-right:-4.64px">%</span></div>
<div class="r" style="left:1135.75px;top:621px;width:121px;height:11.75px;background:#e5e5e5;"></div>
<div class="r" style="left:1135.75px;top:621px;width:42px;height:11.75px;background:#3b618c;"></div>
<div class="t" style="left:637.00px;top:702.00px;font-size:29px;color:#333a47;height:29px;"><span class="w" style="left:-2.20px;letter-spacing:0.640px;">United </span><span class="w" style="left:91.00px;letter-spacing:1.000px;">Kingdom</span></div>
<div class="t" style="left:1019.50px;top:702.00px;font-size:29px;color:#333a47;letter-spacing:-0.767px;">33<span style="margin:0 -1.02px 0 -1.02px">.</span>2k</div>
<div class="t" style="left:1350.40px;top:701.00px;font-size:29px;color:#333a47;"><span style="margin:0 -3.86px 0 -0.00px">1</span>9<span style="margin:0 -0.90px 0 -0.90px">.</span>4<span style="display:inline-block;transform:scaleX(0.82);transform-origin:0 0;margin-right:-4.64px">%</span></div>
<div class="r" style="left:1135.75px;top:711.5px;width:121px;height:11.75px;background:#e5e5e5;"></div>
<div class="r" style="left:1135.75px;top:711.5px;width:30.5px;height:11.75px;background:#3b618c;"></div>
<div class="t" style="left:637.00px;top:792.00px;font-size:29px;color:#333a47;height:29px;"><span class="w" style="left:-2.20px;letter-spacing:0.640px;">United </span><span class="w" style="left:92.90px;letter-spacing:0.033px;">Arab </span><span class="w" style="left:159.35px;letter-spacing:0.036px;">Emirates</span></div>
<div class="t" style="left:1019.00px;top:793.00px;font-size:29px;color:#333a47;letter-spacing:-0.640px;"><span style="margin:0 -2.03px 0 -0.00px">7</span>5<span style="margin:0 -1.02px 0 -1.02px">.</span><span style="margin:0 -1.02px 0 -1.02px">7</span>k</div>
<div class="t" style="left:1353.05px;top:792.00px;font-size:29px;color:#333a47;letter-spacing:-0.145px;">48<span style="margin:0 -1.02px 0 -1.02px">.</span>8<span style="display:inline-block;transform:scaleX(0.82);transform-origin:0 0;margin-right:-4.64px">%</span></div>
<div class="r" style="left:1135.75px;top:802.5px;width:121px;height:11.75px;background:#e5e5e5;"></div>
<div class="r" style="left:1135.75px;top:802.5px;width:56px;height:11.75px;background:#3b618c;"></div>
<div class="t" style="left:636.75px;top:883.00px;font-size:29px;color:#333a47;height:29px;"><span class="w" style="left:-1.50px;letter-spacing:-0.420px;">Canada</span></div>
<div class="t" style="left:1020.55px;top:884.00px;font-size:29px;color:#333a47;letter-spacing:-0.793px;">45<span style="margin:0 -1.02px 0 -1.02px">.</span>3k</div>
<div class="t" style="left:1351.60px;top:883.00px;font-size:29px;color:#333a47;letter-spacing:-0.596px;">25<span style="margin:0 -1.02px 0 -1.02px">.</span><span style="margin:0 -2.17px 0 -2.17px">1</span>0<span style="display:inline-block;transform:scaleX(0.82);transform-origin:0 0;margin-right:-4.64px">%</span></div>
<div class="r" style="left:1135.75px;top:893.25px;width:121px;height:11.75px;background:#e5e5e5;"></div>
<div class="r" style="left:1135.75px;top:893.25px;width:41.25px;height:11.75px;background:#3b618c;"></div>
<div class="t" style="left:637.80px;top:975.00px;font-size:29px;color:#2a58a4;height:29px;font-style:italic;"><span class="w" style="left:-1.60px;letter-spacing:0.675px;">Other </span><span class="w" style="left:81.00px;letter-spacing:0.537px;">Countries</span></div>
<div class="t" style="left:1023.55px;top:976.00px;font-size:29px;color:#2a58a4;letter-spacing:0.587px;font-style:italic;">49.6k</div>
<div class="t" style="left:1353.20px;top:974.00px;font-size:29px;color:#2a58a4;font-style:italic;">29<span style="margin:0 -0.82px 0 -0.82px">.</span><span style="margin:0 -1.76px 0 -1.76px">1</span>2<span style="display:inline-block;transform:scaleX(0.82);transform-origin:0 0;margin-right:-4.64px">%</span></div>
<div class="r" style="left:1135.75px;top:985px;width:121px;height:11.75px;background:#e5e5e5;"></div>
<div class="r" style="left:1135.75px;top:985px;width:35px;height:11.75px;background:#3b618c;"></div>
<div class="r" style="left:636px;top:578.75px;width:939px;height:0;border-top:1.5px dotted #cfd2d8;"></div>
<div class="r" style="left:636px;top:669.75px;width:939px;height:0;border-top:1.5px dotted #cfd2d8;"></div>
<div class="r" style="left:636px;top:761.25px;width:939px;height:0;border-top:1.5px dotted #cfd2d8;"></div>
<div class="r" style="left:636px;top:852.25px;width:939px;height:0;border-top:1.5px dotted #cfd2d8;"></div>
<div class="r" style="left:636px;top:943.75px;width:939px;height:0;border-top:1.5px dotted #cfd2d8;"></div>

</div></body></html>
